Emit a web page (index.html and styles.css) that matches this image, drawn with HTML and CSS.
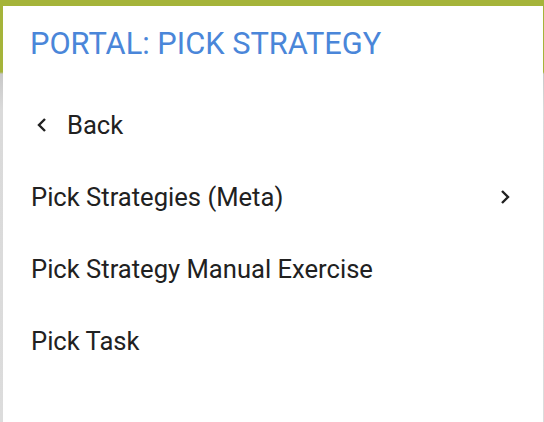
FILE: index.html
```html
<!DOCTYPE html>
<html>
<head>
<meta charset="utf-8">
<link rel="stylesheet" href="styles.css">
</head>
<body>
<div class="panel">
  <h1 class="title">PORTAL: PICK STRATEGY</h1>
  <ul class="menu">
    <li class="item back">
      <svg class="chev" width="16" height="16" viewBox="0 0 16 16"><path d="M12 2 L6 8 L12 14" fill="none" stroke="#212121" stroke-width="2.4"/></svg>
      <span>Back</span>
    </li>
    <li class="item">
      <span>Pick Strategies (Meta)</span>
      <svg class="chev" width="16" height="16" viewBox="0 0 16 16"><path d="M5 2 L11 8 L5 14" fill="none" stroke="#212121" stroke-width="2.4"/></svg>
    </li>
    <li class="item"><span>Pick Strategy Manual Exercise</span></li>
    <li class="item"><span>Pick Task</span></li>
  </ul>
</div>
</body>
</html>
```
FILE: styles.css
```css
html, body {
  margin: 0;
  padding: 0;
  height: 100%;
}
body {
  background: linear-gradient(to bottom, #a5b43a 0, #a5b43a 72px, #c8c8c8 74px, #dadada 110px, #dcdcdc 100%);
  padding: 6px 1px 0 3px;
  box-sizing: border-box;
  font-family: Roboto, "Liberation Sans", sans-serif;
  overflow: hidden;
}
.panel {
  background: #fff;
  height: 100%;
}
.title {
  margin: 0;
  padding: 20px 0 0 27px;
  height: 63px;
  box-sizing: content-box;
  font-size: 30.8px;
  font-weight: 400;
  color: #4a86d9;
  line-height: 36px;
}
.menu {
  list-style: none;
  margin: 0;
  padding: 0;
}
.item {
  height: 72px;
  display: flex;
  align-items: center;
  padding: 0 30px 0 28px;
  font-size: 25.6px;
  color: #212121;
  justify-content: space-between;
}
.item.back {
  justify-content: flex-start;
  gap: 18px;
  padding-left: 30px;
}
```
